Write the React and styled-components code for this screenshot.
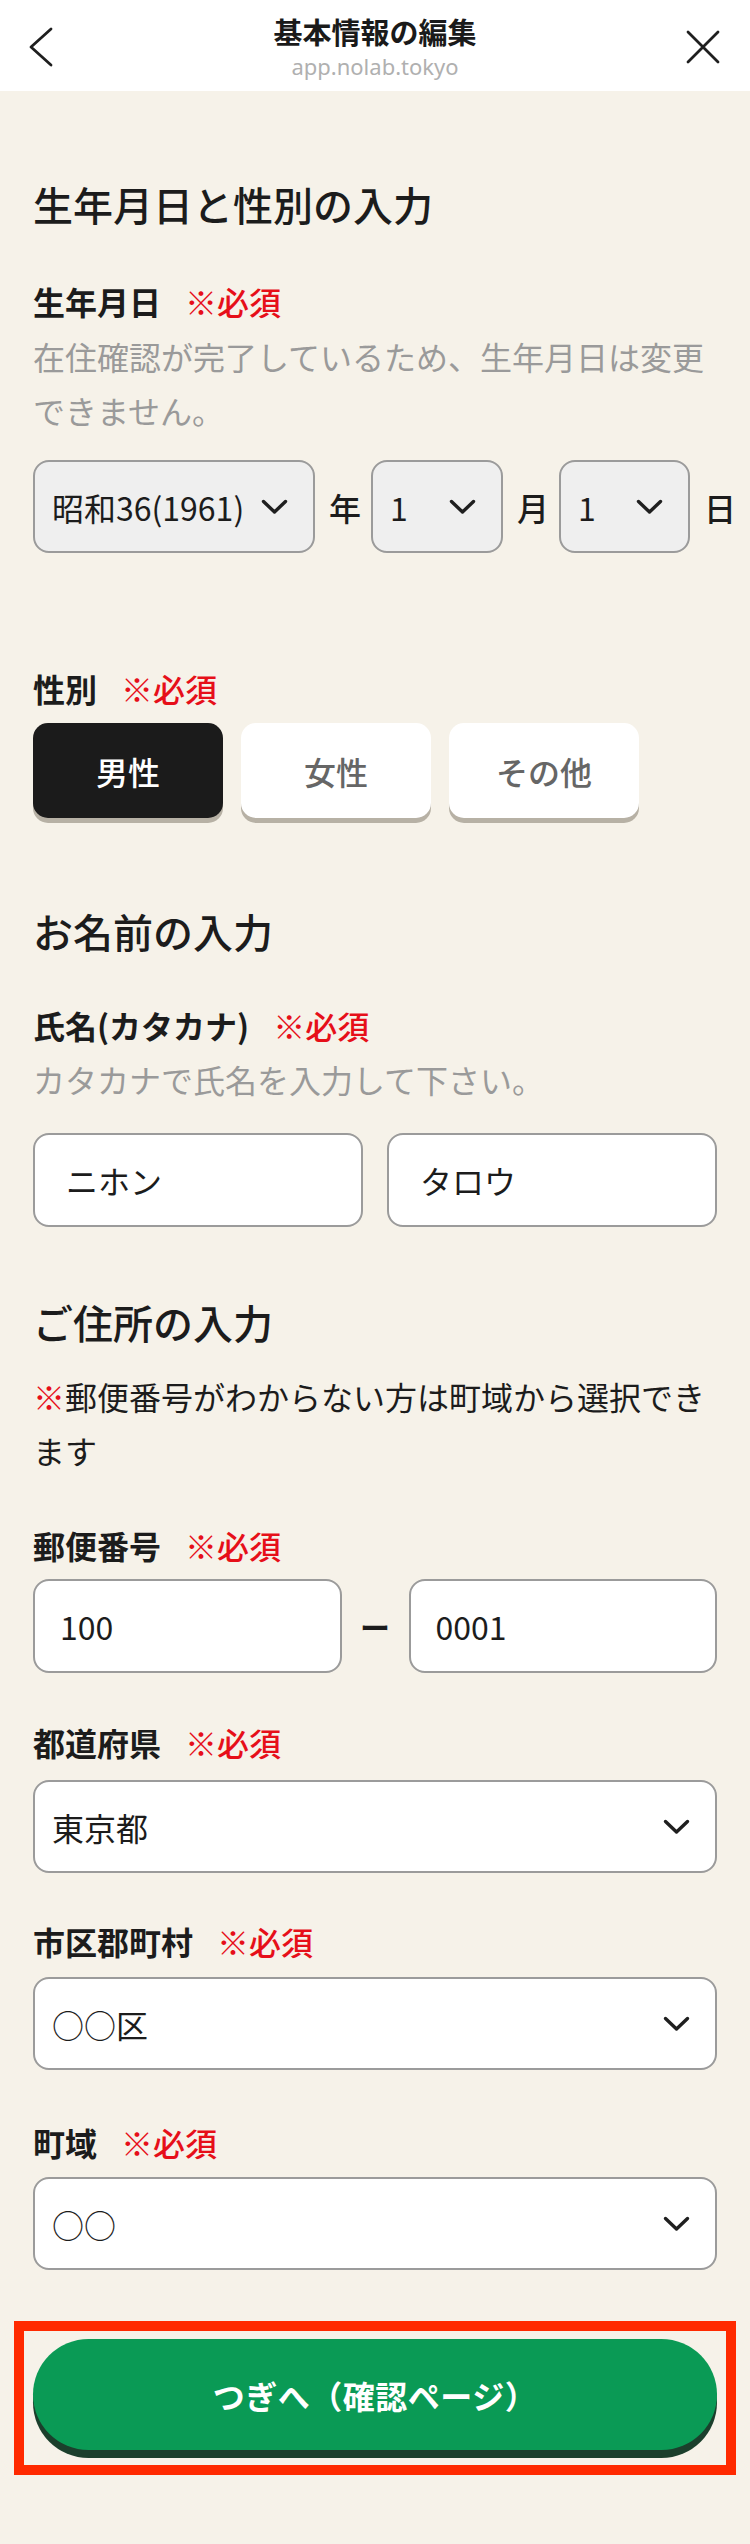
import React from "react";
import styled, { createGlobalStyle } from "styled-components";

const GlobalStyle = createGlobalStyle`
  html, body {
    margin: 0;
    padding: 0;
    background: #f6f2e9;
  }
  body {
    font-family: "Noto Sans CJK JP", "Noto Sans", sans-serif;
    color: #1c1c1c;
  }
  * { box-sizing: border-box; }
`;

const Page = styled.div`
  width: 750px;
  min-height: 2544px;
  background: #f6f2e9;
  display: flex;
  flex-direction: column;
`;

const Header = styled.header`
  height: 91px;
  background: #ffffff;
  display: grid;
  grid-template-columns: 120px 1fr 120px;
  align-items: center;
`;

const HeaderIcon = styled.button`
  border: 0;
  background: transparent;
  padding: 0;
  margin: 3px 0 0;
  display: flex;
  justify-self: ${(p) => (p.$right ? "end" : "start")};
  ${(p) => (p.$right ? "margin-right: 30px;" : "margin-left: 28px;")}
`;

const TitleBlock = styled.div`
  display: flex;
  flex-direction: column;
  align-items: center;
  padding-top: 4px;
`;

const Title = styled.h1`
  margin: 0;
  font-size: 29px;
  line-height: 36px;
  font-weight: 700;
  color: #1a1a1a;
`;

const Subtitle = styled.div`
  font-family: "Noto Sans", sans-serif;
  font-size: 22px;
  line-height: 34px;
  color: #b0b0b0;
`;

const Content = styled.main`
  padding: 0 33px 69px;
  display: flex;
  flex-direction: column;
`;

const SectionHeading = styled.h2`
  margin: ${(p) => p.$mt}px 0 0;
  font-size: 40px;
  line-height: 56px;
  font-weight: 500;
  color: #1c1c1c;
`;

const Label = styled.div`
  margin-top: ${(p) => p.$mt}px;
  margin-bottom: ${(p) => p.$mb ?? 12}px;
  font-size: 32px;
  line-height: 48px;
  font-weight: 700;
  color: #1c1c1c;
  display: flex;
  align-items: center;
`;

const Required = styled.span`
  margin-left: 24px;
  color: #e60f19;
  font-weight: 500;
  font-size: 32px;
`;

const Note = styled.p`
  margin: ${(p) => p.$mt}px 0 0;
  font-size: 32px;
  line-height: 54px;
  color: ${(p) => (p.$muted ? "#9a9a9a" : "#1c1c1c")};
  font-weight: 400;
`;

const Mark = styled.span`
  color: #e60f19;
`;

const DateRow = styled.div`
  margin-top: ${(p) => p.$mt}px;
  display: flex;
  align-items: center;
  gap: 14px;
`;

const SelectBox = styled.div`
  width: ${(p) => (p.$w ? `${p.$w}px` : "100%")};
  height: 93px;
  border: 2px solid #9b9b9b;
  border-radius: 16px;
  background: ${(p) => (p.$disabled ? "#efefef" : "#ffffff")};
  display: flex;
  align-items: center;
  justify-content: space-between;
  padding: 0 25px 0 17px;
  font-size: 32px;
  color: #1c1c1c;
  flex-shrink: 0;
`;

const UnitText = styled.span`
  font-size: 32px;
  font-weight: 500;
  color: #1c1c1c;
  width: 28px;
  flex-shrink: 0;
`;

const GenderRow = styled.div`
  display: flex;
  gap: 18px;
`;

const GenderButton = styled.button`
  width: 190px;
  height: 95px;
  border: 0;
  border-radius: 15px;
  background: ${(p) => (p.$active ? "#1b1b1b" : "#ffffff")};
  color: ${(p) => (p.$active ? "#ffffff" : "#666666")};
  box-shadow: 0 5px 0 #b7b1a5;
  font-family: "Noto Sans CJK JP", "Noto Sans", sans-serif;
  font-size: 32px;
  font-weight: 500;
  padding: 0;
`;

const TwoCol = styled.div`
  display: grid;
  grid-template-columns: ${(p) => (p.$dash ? "1fr 67px 1fr" : "1fr 1fr")};
  gap: ${(p) => (p.$dash ? 0 : 24)}px;
  align-items: center;
  margin-top: ${(p) => p.$mt ?? 0}px;
`;

const TextInput = styled.input`
  width: 100%;
  height: 94px;
  border: 2px solid #9b9b9b;
  border-radius: 16px;
  background: #ffffff;
  padding: 0 0 0 ${(p) => p.$pad ?? 31}px;
  font-family: "Noto Sans CJK JP", "Noto Sans", sans-serif;
  font-size: 32px;
  color: #1c1c1c;
  outline: none;
`;

const Dash = styled.span`
  text-align: center;
  font-size: 30px;
  font-weight: 700;
  color: #1c1c1c;
`;

const Highlight = styled.div`
  margin: 51px -19px 0;
  border: 10px solid #ff2a00;
  padding: 8px 9px 15px;
`;

const PrimaryButton = styled.button`
  width: 100%;
  height: 111px;
  border: 0;
  border-radius: 56px;
  background: #0a9a55;
  box-shadow: 0 8px 0 #1b3f2c;
  color: #ffffff;
  font-family: "Noto Sans CJK JP", "Noto Sans", sans-serif;
  font-size: 32px;
  font-weight: 700;
  letter-spacing: 0.5px;
`;

const Chevron = () => (
  <svg width="27" height="16" viewBox="0 0 27 16" fill="none">
    <path d="M2.5 2.5 L13.5 13 L24.5 2.5" stroke="#1f1f1f" strokeWidth="3.4" strokeLinecap="round" strokeLinejoin="round" />
  </svg>
);

const BackIcon = () => (
  <svg width="26" height="40" viewBox="0 0 26 40" fill="none">
    <path d="M23 2 L3 20 L23 38" stroke="#1f1f1f" strokeWidth="2.8" strokeLinecap="round" strokeLinejoin="round" />
  </svg>
);

const CloseIcon = () => (
  <svg width="34" height="34" viewBox="0 0 34 34" fill="none">
    <path d="M2 2 L32 32 M32 2 L2 32" stroke="#1f1f1f" strokeWidth="2.8" strokeLinecap="round" />
  </svg>
);

const Select = ({ value, w, disabled }) => (
  <SelectBox $w={w} $disabled={disabled}>
    <span>{value}</span>
    <Chevron />
  </SelectBox>
);

const FieldLabel = ({ children, mt, mb }) => (
  <Label $mt={mt} $mb={mb}>
    {children}
    <Required>※必須</Required>
  </Label>
);

export default function App() {
  return (
    <>
      <GlobalStyle />
      <Page>
        <Header>
          <HeaderIcon aria-label="戻る">
            <BackIcon />
          </HeaderIcon>
          <TitleBlock>
            <Title>基本情報の編集</Title>
            <Subtitle>app.nolab.tokyo</Subtitle>
          </TitleBlock>
          <HeaderIcon $right aria-label="閉じる">
            <CloseIcon />
          </HeaderIcon>
        </Header>

        <Content>
          <SectionHeading $mt={85}>生年月日と性別の入力</SectionHeading>
          <FieldLabel mt={45} mb={0}>生年月日</FieldLabel>
          <Note $muted $mt={4}>
            在住確認が完了しているため、生年月日は変更できません。
          </Note>
          <DateRow $mt={23}>
            <Select value="昭和36(1961)" w={282} disabled />
            <UnitText>年</UnitText>
            <Select value="1" w={132} disabled />
            <UnitText>月</UnitText>
            <Select value="1" w={131} disabled />
            <UnitText>日</UnitText>
          </DateRow>

          <FieldLabel mt={111} mb={11}>性別</FieldLabel>
          <GenderRow>
            <GenderButton $active>男性</GenderButton>
            <GenderButton>女性</GenderButton>
            <GenderButton>その他</GenderButton>
          </GenderRow>

          <SectionHeading $mt={85}>お名前の入力</SectionHeading>
          <FieldLabel mt={42} mb={0}>氏名(カタカナ)</FieldLabel>
          <Note $muted $mt={3}>カタカナで氏名を入力して下さい。</Note>
          <TwoCol $mt={27}>
            <TextInput defaultValue="ニホン" $pad={31} />
            <TextInput defaultValue="タロウ" $pad={31} />
          </TwoCol>

          <SectionHeading $mt={67}>ご住所の入力</SectionHeading>
          <Note $mt={19}>
            <Mark>※</Mark>郵便番号がわからない方は町域から選択できます
          </Note>

          <FieldLabel mt={44} mb={10}>郵便番号</FieldLabel>
          <TwoCol $dash>
            <TextInput defaultValue="100" $pad={25} />
            <Dash>ー</Dash>
            <TextInput defaultValue="0001" $pad={25} />
          </TwoCol>

          <FieldLabel mt={45} mb={14}>都道府県</FieldLabel>
          <Select value="東京都" />

          <FieldLabel mt={44} mb={12}>市区郡町村</FieldLabel>
          <Select value="○○区" />

          <FieldLabel mt={48} mb={11}>町域</FieldLabel>
          <Select value="○○" />

          <Highlight>
            <PrimaryButton>つぎへ（確認ページ）</PrimaryButton>
          </Highlight>
        </Content>
      </Page>
    </>
  );
}
